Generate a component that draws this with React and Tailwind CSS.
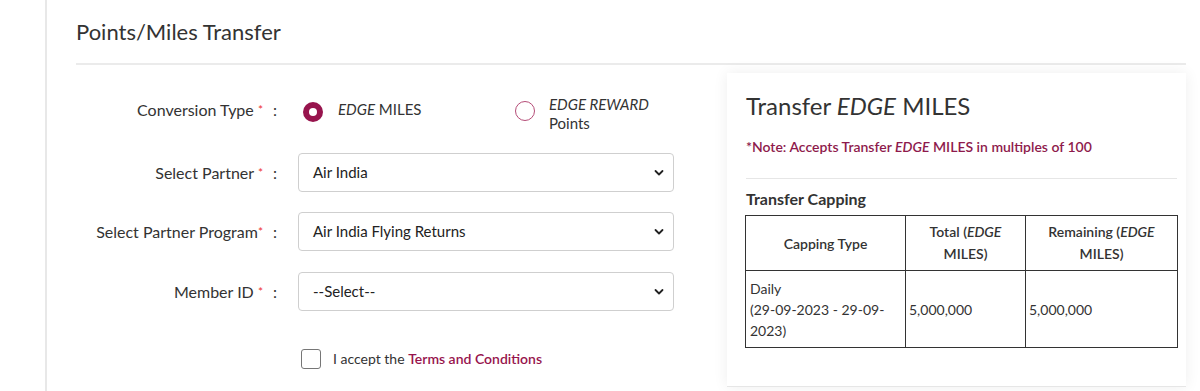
import React from "react";

const Chevron = () => (
  <svg width="10" height="7" viewBox="0 0 10 7" className="absolute right-[9px] top-1/2 -translate-y-1/2">
    <path d="M1.5 1.5 L5 5 L8.5 1.5" fill="none" stroke="#222" strokeWidth="1.8" strokeLinecap="round" strokeLinejoin="round" />
  </svg>
);

const Label = ({ text, starGap = true }) => (
  <div className="w-[187px] shrink-0 text-right text-[16px] leading-[20px] text-[#333]">
    {text}
    {starGap ? " " : ""}
    <span className="text-[#e33] text-[12px] align-top">*</span>
  </div>
);

const SelectBox = ({ value }) => (
  <div className="relative w-[376px] h-[39px] border border-[#cfcfcf] rounded-[4px] bg-white flex items-center pl-[14px] text-[15px] text-[#222]">
    {value}
    <Chevron />
  </div>
);

export default function App() {
  return (
    <div className="w-[1200px] h-[391px] overflow-hidden bg-white flex" style={{ fontFamily: "Lato, 'Open Sans', sans-serif" }}>
      <div className="w-[47px] shrink-0 border-r-[2px] border-[#e8e8e8]" />
      <div className="flex-1 pl-[29px] pr-[14px]">
        <div className="pt-[18px] text-[22px] leading-[28px] text-[#333]">Points/Miles Transfer</div>
        <div className="mt-[17px] h-[2px] bg-[#ebebeb]" />
        <div className="flex">
          <div className="w-[651px] shrink-0 flex flex-col">
            {/* Conversion type */}
            <div className="mt-[27px] h-[39px] flex items-center">
              <div className="w-[187px] shrink-0 text-right text-[16px] leading-[20px] text-[#333] -mt-[4px]">
                Conversion Type <span className="text-[#e33] text-[12px] align-top">*</span>
              </div>
              <div className="w-[40px] pl-[10px] text-[16px] leading-[20px] text-[#333] shrink-0 -mt-[4px]">:</div>
              <div className="flex items-center w-[400px]">
                <div className="w-[20px] h-[20px] rounded-full bg-[#97144d] flex items-center justify-center shrink-0">
                  <div className="w-[8px] h-[8px] rounded-full bg-white" />
                </div>
                <div className="ml-[15px] w-[162px] text-[15px] leading-[19px] text-[#333] -mt-[4px]">
                  <span className="italic">EDGE</span> MILES
                </div>
                <div className="ml-[15px] -mt-[1px] w-[20px] h-[20px] rounded-full border-[1.5px] border-[#b54c77] shrink-0" />
                <div className="ml-[14px] text-[15px] leading-[19px] text-[#333] mt-[4px]">
                  <span className="italic">EDGE REWARD</span>
                  <br />
                  Points
                </div>
              </div>
            </div>
            {/* Select Partner */}
            <div className="mt-[22px] flex items-center">
              <Label text="Select Partner" />
              <div className="w-[35px] pl-[10px] text-[16px] text-[#333] shrink-0">:</div>
              <SelectBox value="Air India" />
            </div>
            <div className="mt-[20px] flex items-center">
              <Label text="Select Partner Program" starGap={false} />
              <div className="w-[35px] pl-[10px] text-[16px] text-[#333] shrink-0">:</div>
              <SelectBox value="Air India Flying Returns" />
            </div>
            <div className="mt-[21px] flex items-center">
              <Label text="Member ID" />
              <div className="w-[35px] pl-[10px] text-[16px] text-[#333] shrink-0">:</div>
              <SelectBox value="--Select--" />
            </div>
            <div className="mt-[38px] flex items-center pl-[225px]">
              <div className="w-[20px] h-[20px] border-[1.5px] border-[#767676] rounded-[3px] bg-white shrink-0" />
              <div className="ml-[12px] text-[14px] text-[#333] -mt-[1px]">
                I accept the <span className="text-[#97144d] font-semibold">Terms and Conditions</span>
              </div>
            </div>
          </div>
          {/* Right card */}
          <div className="mt-[8px] w-[459px] h-[314px] bg-white shadow-[0_0_14px_rgba(0,0,0,0.07)] border-b border-[#e6e6e6] pl-[19px] pr-[9px]">
            <div className="pt-[19px] text-[24px] leading-[28px] text-[#333]">
              Transfer <span className="italic">EDGE</span> MILES
            </div>
            <div className="mt-[17px] text-[14px] leading-[20px] font-semibold text-[#8e1a4c]">
              *Note: Accepts Transfer <span className="italic">EDGE</span> MILES in multiples of 100
            </div>
            <div className="mt-[21px] h-[1px] bg-[#e6e6e6]" />
            <div className="mt-[10px] text-[16px] leading-[20px] font-bold text-[#333]">Transfer Capping</div>
            <table className="mt-[6px] -ml-[1px] w-[433px] border-collapse text-[14px] text-[#333] table-fixed">
              <thead>
                <tr className="h-[55px]">
                  <th className="w-[160px] border border-[#333] font-semibold text-center align-middle">Capping Type</th>
                  <th className="w-[120px] border border-[#333] font-semibold text-center align-middle leading-[22px]">
                    Total (<span className="italic">EDGE</span>
                    <br />
                    MILES)
                  </th>
                  <th className="w-[152px] border border-[#333] font-semibold text-center align-middle leading-[22px]">
                    Remaining (<span className="italic">EDGE</span>
                    <br />
                    MILES)
                  </th>
                </tr>
              </thead>
              <tbody>
                <tr className="h-[77px]">
                  <td className="border border-[#333] px-[4px] align-middle leading-[21px]">
                    Daily
                    <br />
                    (29-09-2023 - 29-09-
                    <br />
                    2023)
                  </td>
                  <td className="border border-[#333] px-[3px] align-middle">5,000,000</td>
                  <td className="border border-[#333] px-[3px] align-middle">5,000,000</td>
                </tr>
              </tbody>
            </table>
          </div>
        </div>
      </div>
    </div>
  );
}
